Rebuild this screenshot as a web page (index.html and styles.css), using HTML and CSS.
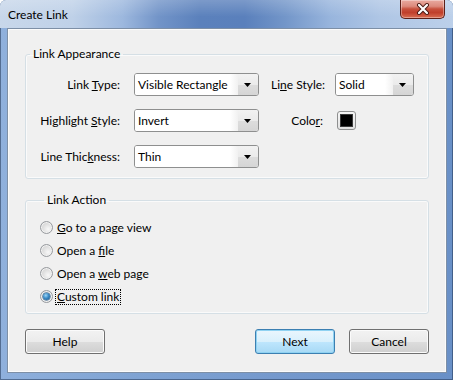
FILE: index.html
```html
<!DOCTYPE html>
<html>
<head>
<meta charset="utf-8">
<title>Create Link</title>
<link rel="stylesheet" href="styles.css">
</head>
<body>
<div class="window">
  <div class="titlebar">
    <span class="title">Create Link</span>
    <div class="close">
      <svg width="14" height="12" viewBox="0 0 14 12">
        <path d="M3 2 L11 10 M11 2 L3 10" stroke="#4a1a14" stroke-width="4" stroke-linecap="round" fill="none"/>
        <path d="M3 2 L11 10 M11 2 L3 10" stroke="#ffffff" stroke-width="2.2" stroke-linecap="round" fill="none"/>
      </svg>
    </div>
  </div>
  <div class="client">
    <fieldset class="group appearance">
      <legend>Link Appearance</legend>
      <div class="grid">
        <label class="lbl first">Link <u>T</u>ype:</label>
        <div class="combo"><span class="val">Visible Rectangle</span><span class="btn"><svg width="7" height="4" viewBox="0 0 7 4"><polygon points="0,0 7,0 3.5,4" fill="#000"/></svg></span></div>
        <label class="lbl">Li<u>n</u>e Style:</label>
        <div class="combo"><span class="val">Solid</span><span class="btn"><svg width="7" height="4" viewBox="0 0 7 4"><polygon points="0,0 7,0 3.5,4" fill="#000"/></svg></span></div>

        <label class="lbl first">Highlight <u>S</u>tyle:</label>
        <div class="combo"><span class="val">Invert</span><span class="btn"><svg width="7" height="4" viewBox="0 0 7 4"><polygon points="0,0 7,0 3.5,4" fill="#000"/></svg></span></div>
        <label class="lbl">Colo<u>r</u>:</label>
        <div class="swatch"><span class="chip"></span></div>

        <label class="lbl first">Line Thic<u>k</u>ness:</label>
        <div class="combo"><span class="val">Thin</span><span class="btn"><svg width="7" height="4" viewBox="0 0 7 4"><polygon points="0,0 7,0 3.5,4" fill="#000"/></svg></span></div>
      </div>
    </fieldset>

    <fieldset class="group action">
      <legend>Link Action</legend>
      <div class="radio"><span class="dot"></span><span class="rtext"><u>G</u>o to a page view</span></div>
      <div class="radio"><span class="dot"></span><span class="rtext">Open a <u>f</u>ile</span></div>
      <div class="radio"><span class="dot"></span><span class="rtext">Open a <u>w</u>eb page</span></div>
      <div class="radio"><span class="dot checked"></span><span class="rtext focus"><u>C</u>ustom link</span></div>
    </fieldset>

    <div class="buttons">
      <div class="button">Help</div>
      <div class="spacer"></div>
      <div class="button default">Next</div>
      <div class="button">Cancel</div>
    </div>
  </div>
</div>
</body>
</html>
```

FILE: styles.css
```css
html, body {
  margin: 0;
  padding: 0;
  background: #ffffff;
}

body {
  font-family: Lato, "Noto Sans", "DejaVu Sans", sans-serif;
  font-size: 12px;
  color: #000;
}

.window {
  width: 453px;
  height: 380px;
  box-sizing: border-box;
  display: flex;
  flex-direction: column;
  overflow: hidden;
  border-radius: 6px 6px 0 0;
  background: linear-gradient(to right, #8fb0dc 0%, #7fa3d3 30%, #7599cd 60%, #6990c7 100%);
  box-shadow: inset 0 0 0 1px rgba(35, 55, 85, 0.55);
}

.titlebar {
  flex: none;
  height: 28px;
  display: flex;
  justify-content: space-between;
  align-items: flex-start;
  background:
    linear-gradient(to bottom, rgba(255,255,255,0.2), rgba(255,255,255,0) 60%),
    linear-gradient(to right, #c8d7ea 0%, #bfd1e8 16%, #9db8de 27%, #7294c8 35%, #5b81bc 44%, #5a80bc 54%, #7396c9 63%, #98b5dd 73%, #afc6e5 84%, #bcd0ea 100%);
}

.title {
  padding: 7px 0 0 8px;
  line-height: 16px;
  color: #000;
}

.close {
  width: 45px;
  height: 19px;
  margin-right: 8px;
  box-sizing: border-box;
  border: 1px solid #5c2019;
  border-top: none;
  border-radius: 0 0 5px 5px;
  display: flex;
  align-items: center;
  justify-content: center;
  background: linear-gradient(to bottom, #e9aaa0 0%, #dc8a7c 35%, #c7503c 50%, #c03f2b 70%, #d96d52 100%);
  box-shadow: inset 0 0 0 1px rgba(255, 255, 255, 0.35);
}

.client {
  flex: none;
  height: 345px;
  margin: 0 6px 0 7px;
  box-sizing: border-box;
  border: 1px solid #7d8fa6;
  background: #f0f0f0;
  padding: 0 17px;
  box-shadow: inset 0 0 0 1px #fbfbfb;
}

.group {
  margin: 17px 0 0;
  padding: 11px 0 10px;
  border: 1px solid #d5dfe5;
  border-radius: 3px;
  min-width: 0;
  box-shadow: inset 0 0 0 1px #fafafa;
}

.group legend {
  margin-left: 4px;
  padding: 0 3px;
  line-height: 16px;
  color: #000;
}

.grid {
  display: grid;
  grid-template-columns: 96px 125px 52px 79px;
  grid-auto-rows: 23px;
  column-gap: 12px;
  row-gap: 13px;
  align-items: center;
}

.lbl {
  text-align: right;
  line-height: 16px;
  white-space: nowrap;
}

.lbl.first {
  padding-right: 2px;
}

.combo {
  height: 23px;
  box-sizing: border-box;
  border: 1px solid #8e8f8f;
  border-radius: 3px;
  background: #fff;
  display: flex;
  overflow: hidden;
}

.combo .val {
  flex: 1;
  padding-left: 3px;
  line-height: 21px;
  white-space: nowrap;
  background: linear-gradient(to right, #ffffff calc(100% - 8px), #f1f1f1 100%);
}

.combo .btn {
  width: 19px;
  display: flex;
  align-items: center;
  justify-content: center;
  padding-right: 1px;
  background: linear-gradient(to bottom, #f2f2f2 0%, #ebebeb 50%, #dddddd 51%, #d5d5d5 100%);
}

.swatch {
  width: 19px;
  height: 19px;
  margin-left: 2px;
  box-sizing: border-box;
  border: 1px solid #8e8f8f;
  border-radius: 3px;
  background: linear-gradient(to bottom, #f6f6f6, #e2e2e2);
  display: flex;
  align-items: center;
  justify-content: center;
}

.chip {
  width: 11px;
  height: 11px;
  background: #000;
  border: 1px solid #3a3a3a;
}

.action {
  margin-top: 13px;
  padding: 8px 0 5px 14px;
}

.radio {
  height: 23px;
  display: flex;
  align-items: center;
  gap: 4px;
}

.dot {
  width: 13px;
  height: 13px;
  box-sizing: border-box;
  border-radius: 50%;
  border: 1px solid #979a9e;
  background: radial-gradient(circle at 65% 65%, #f8f8f8 0%, #e2e2e2 45%, #c9c9c9 100%);
  box-shadow: inset 0 0 0 1px #f2f2f2;
  display: flex;
  align-items: center;
  justify-content: center;
}

.dot.checked::after {
  content: "";
  width: 7px;
  height: 7px;
  border-radius: 50%;
  background: radial-gradient(circle at 40% 35%, #9fd6f6 0%, #3b8bc6 45%, #1a4f82 100%);
  box-shadow: 0 0 0 0.5px #174a78;
}

.rtext {
  line-height: 14px;
  white-space: nowrap;
}

.rtext.focus {
  margin-left: -1px;
  padding: 0 1px;
  outline: 1px dotted #000;
}

.buttons {
  margin-top: 15px;
  display: flex;
  gap: 14px;
}

.spacer {
  flex: 1;
}

.button {
  width: 80px;
  height: 25px;
  box-sizing: border-box;
  border: 1px solid #707070;
  border-radius: 3px;
  text-align: center;
  line-height: 23px;
  background: linear-gradient(to bottom, #f2f2f2 0%, #ebebeb 50%, #dddddd 51%, #cfcfcf 100%);
  box-shadow: inset 0 0 0 1px #fbfbfb;
}

.button.default {
  border-color: #3c7fb1;
  background: linear-gradient(to bottom, #eaf6fd 0%, #d9f0fc 50%, #bee6fd 51%, #a7d9f5 100%);
  box-shadow: inset 0 0 0 1px #8fd2f2;
}
```
